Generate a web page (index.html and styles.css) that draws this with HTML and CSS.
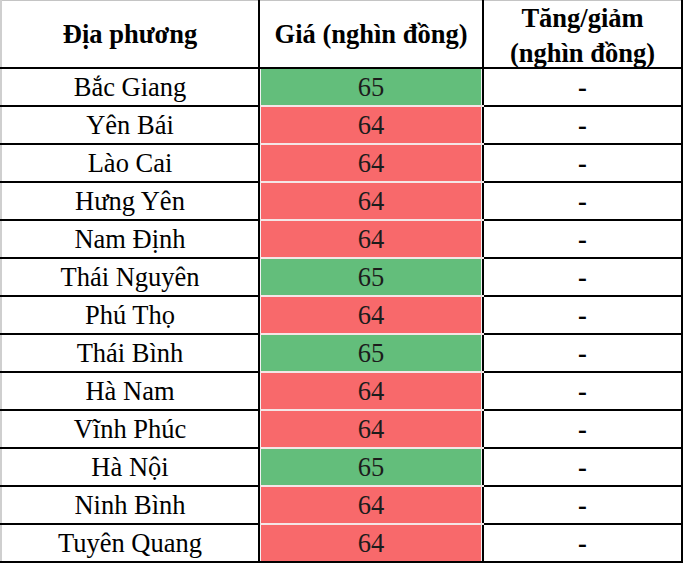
FILE: index.html
```html
<!DOCTYPE html>
<html lang="vi">
<head>
<meta charset="utf-8">
<title>Giá heo hơi</title>
<link rel="stylesheet" href="styles.css">
</head>
<body>
<table class="price-table">
  <colgroup>
    <col class="c-place">
    <col class="c-price">
    <col class="c-change">
  </colgroup>
  <thead>
    <tr>
      <th>Địa phương</th>
      <th>Giá (nghìn đồng)</th>
      <th><span class="two-line">Tăng/giảm<br>(nghìn đồng)</span></th>
    </tr>
  </thead>
  <tbody>
    <tr><td>Bắc Giang</td><td class="price up">65</td><td class="chg">-</td></tr>
    <tr><td>Yên Bái</td><td class="price down">64</td><td class="chg">-</td></tr>
    <tr><td>Lào Cai</td><td class="price down">64</td><td class="chg">-</td></tr>
    <tr><td>Hưng Yên</td><td class="price down">64</td><td class="chg">-</td></tr>
    <tr><td>Nam Định</td><td class="price down">64</td><td class="chg">-</td></tr>
    <tr><td>Thái Nguyên</td><td class="price up">65</td><td class="chg">-</td></tr>
    <tr><td>Phú Thọ</td><td class="price down">64</td><td class="chg">-</td></tr>
    <tr><td>Thái Bình</td><td class="price up">65</td><td class="chg">-</td></tr>
    <tr><td>Hà Nam</td><td class="price down">64</td><td class="chg">-</td></tr>
    <tr><td>Vĩnh Phúc</td><td class="price down">64</td><td class="chg">-</td></tr>
    <tr><td>Hà Nội</td><td class="price up">65</td><td class="chg">-</td></tr>
    <tr><td>Ninh Bình</td><td class="price down">64</td><td class="chg">-</td></tr>
    <tr><td>Tuyên Quang</td><td class="price down">64</td><td class="chg">-</td></tr>
  </tbody>
</table>
</body>
</html>
```

FILE: styles.css
```css
html, body {
  margin: 0;
  padding: 0;
  background: #ffffff;
}

body {
  font-family: "Liberation Serif", Tinos, "Times New Roman", "DejaVu Serif", serif;
  color: #000;
}

.price-table {
  border-collapse: collapse;
  table-layout: fixed;
  width: 683px;
  border-top: 1px solid #c4c4c4;
  border-left: 2px solid #cfcfcf;
  border-right: 2px solid #000;
  border-bottom: 2px solid #000;
}

.c-place { width: 258px; }
.c-price { width: 224px; }
.c-change { width: 199px; }

.price-table th {
  height: 66px;
  padding: 0 4px;
  font-family: "Liberation Serif", Tinos, "Times New Roman", "DejaVu Serif", serif;
  font-size: 26.5px;
  font-weight: bold;
  line-height: 35px;
  text-align: center;
  vertical-align: middle;
  border-right: 2px solid #000;
  border-bottom: 2px solid #000;
}

.two-line {
  display: block;
  margin: -1px 0 -4px;
}

.price-table td {
  height: 36px;
  padding: 0 4px;
  font-family: "Liberation Serif", Tinos, "Times New Roman", "DejaVu Serif", serif;
  font-size: 26.5px;
  line-height: 34px;
  text-align: center;
  vertical-align: middle;
  border-right: 2px solid #000;
  border-bottom: 2px solid #000;
}

.price-table td.price {
  color: #1c1c1c;
  border-bottom: 2px solid #f4e6e6;
  box-shadow: inset 1px 0 0 #f2f2f2, inset -1px 0 0 #f2f2f2;
}

.price-table tr:last-child td.price {
  border-bottom: 2px solid #000;
}

.price-table td.up { background: #63be7b; }
.price-table td.down { background: #f8696b; }

.price-table td.chg {
  font-weight: bold;
}
```
